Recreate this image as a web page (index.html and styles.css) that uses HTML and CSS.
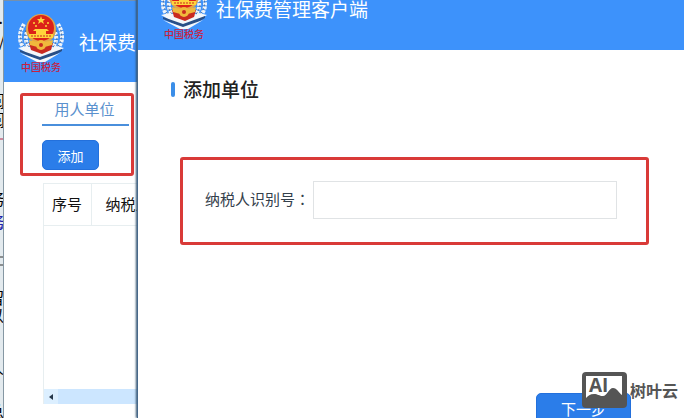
FILE: index.html
```html
<!DOCTYPE html>
<html lang="zh-CN">
<head>
<meta charset="utf-8">
<title>社保费管理客户端</title>
<link rel="stylesheet" href="styles.css">
</head>
<body>
<svg width="0" height="0" class="defs" aria-hidden="true">
  <symbol id="emblem" viewBox="0 0 46 64">
    <g fill="none" stroke="#eef3f8" stroke-width="4" stroke-dasharray="3 1">
      <path d="M6 14C0 24 0 34 10 42"/><path d="M40 14C46 24 46 34 36 42"/>
      <path d="M9 22C6 30 9 36 15 41"/><path d="M37 22C40 30 37 36 31 41"/>
    </g>
    <g fill="none" stroke="#50719c" stroke-width="1" stroke-dasharray="2 2">
      <path d="M5 16C0 25 2 34 12 42"/><path d="M41 16C46 25 44 34 34 42"/>
      <path d="M8 20C5 28 8 35 14 40"/><path d="M38 20C41 28 38 35 32 40"/>
    </g>
    <path d="M0 38L9 36L24 43L38 36L46 38L27 49L20 49Z" fill="#f4f7fa"/>
    <path d="M2 40L22 47L44 39L44 41L27 51L20 50L2 42Z" fill="#294f86"/>
    <path d="M2 43L22 50L42 43L27 52L19 52Z" fill="#f4f7fa"/>
    <path d="M11 33L35 33L33 40L24 44L13 40Z" fill="#c92a20"/>
    <circle cx="23" cy="19" r="15" fill="#e3a546"/>
    <circle cx="23" cy="18" r="13" fill="#dc2119"/>
    <path d="M23 6L24 9L27 9L25 11L26 14L23 12L20 14L21 11L19 9L22 9Z" fill="#ffd43b"/>
    <g fill="#ffd43b"><circle cx="16" cy="13" r="1"/><circle cx="18" cy="16" r="1"/><circle cx="28" cy="16" r="1"/><circle cx="30" cy="13" r="1"/>
      <path d="M17 19H29L31 21H28V24H35V28H11V24H18V21H15Z"/></g>
    <path d="M13 26H33" stroke="#c92a20" stroke-dasharray="2 1"/>
    <path d="M11 30Q23 34 35 30L34 35Q23 39 12 35Z" fill="#f0b83c"/>
    <circle cx="23" cy="35" r="5" fill="#f0b83c"/><circle cx="23" cy="35" r="2" fill="#c92a20"/>
    <text x="23" y="61" text-anchor="middle" class="emblem-name">中国税务</text>
  </symbol>
</svg>

<div class="desktop">
  <svg class="document" aria-hidden="true">
    <g text-anchor="end">
      <text x="3" y="24">.</text><text x="5" y="47">/</text>
      <text x="5" y="107">阅</text><text x="5" y="126">阅</text>
      <text x="5" y="205">务</text><text x="5" y="228" fill="#2222aa">务</text>
      <text x="4" y="287">、</text><text x="4" y="304">留</text><text x="4" y="322">以</text>
      <text x="4" y="374">人</text><text x="4" y="418">总</text>
    </g>
    <path d="M0 139H4" stroke="#b5294c"/><path d="M0 228H4" stroke="#2222aa"/>
    <path d="M0 257H4M0 265H4" stroke="#333"/>
  </svg>

  <main class="window list-window">
    <header class="titlebar">
      <svg class="emblem"><use href="#emblem"/></svg>
      <span class="app-name">社保费</span>
    </header>
    <div class="list-body">
      <div class="callout tools">
        <a class="tab" href="#units">用人单位</a>
        <button class="button add" type="button">添加</button>
      </div>
      <div class="grid" id="units">
        <table>
          <thead><tr><th class="number">序号</th><th>纳税人识别号</th></tr></thead>
        </table>
        <div class="scrollbar">
          <button class="scroll-left" type="button" aria-label="向左滚动"><svg viewBox="0 0 14 14"><path d="M9 4V10L5 7Z" fill="#25374a"/></svg></button>
        </div>
      </div>
    </div>
  </main>

  <section class="window dialog">
    <header class="titlebar">
      <svg class="emblem"><use href="#emblem"/></svg>
      <span class="app-name">社保费管理客户端</span>
    </header>
    <form class="dialog-body">
      <h1>添加单位</h1>
      <div class="callout field">
        <label for="taxpayer">纳税人识别号<span class="colon" lang="zh-TW">：</span></label>
        <input id="taxpayer" type="text">
      </div>
      <button class="button next" type="button">下一步</button>
    </form>
  </section>

  <div class="watermark">
    <svg viewBox="0 0 45 36" aria-hidden="true">
      <rect width="45" height="36" rx="4" fill="#555"/>
      <path d="M4 4H40V23C37 21 35 16 31 16C27 16 25 24 21 24C17 24 16 22 12 22C8 22 6 24 4 26Z" fill="#fff"/>
      <text x="7" y="20" class="mark">AI</text>
    </svg>
    <span>树叶云</span>
  </div>
</div>
</body>
</html>
```
FILE: styles.css
```css
* { box-sizing: border-box; }

body {
  margin: 0;
  font-family: "Noto Sans CJK SC", sans-serif;
  color: #222;
  background: #fff;
}

button, input { font: inherit; }

.defs { position: absolute; }

.desktop {
  position: relative;
  display: flex;
  height: 100vh;
  overflow: hidden;
}

.document {
  flex: none;
  width: 4px;
  height: 100%;
  background: #e3eaee;
  border-right: 1px solid #8597a3;
  font-size: 16px;
}

.window { background: #fff; }

.list-window {
  flex: 1;
  display: flex;
  flex-direction: column;
  border-top: 1px solid #7590ad;
}

.titlebar {
  flex: none;
  display: flex;
  align-items: center;
  height: 81px;
  padding-left: 14px;
  gap: 15px;
  background: #3d92fb;
  color: #fff;
}

.emblem { width: 46px; height: 64px; }

.emblem-name {
  font-family: "Noto Sans CJK SC", sans-serif;
  font-size: 10px;
  font-weight: 500;
  fill: #c9213f;
}

.app-name { font-size: 19px; line-height: 28px; }

.list-body {
  flex: 1;
  display: flex;
  flex-direction: column;
  padding: 11px 16px 14px;
}

.callout {
  border: 3px solid #d93a38;
  border-radius: 3px;
}

.tools {
  align-self: flex-start;
  display: flex;
  flex-direction: column;
  align-items: flex-start;
  gap: 14px;
  width: 114px;
  height: 83px;
  padding-left: 19px;
}

.tab {
  width: 87px;
  height: 30px;
  padding-right: 2px;
  border-bottom: 2px solid #4a8fdc;
  color: #5b91ce;
  font-size: 15px;
  line-height: 26px;
  text-align: center;
  text-decoration: none;
}

.button {
  border: 1px solid #2370dc;
  border-radius: 5px;
  background: #2b7de9;
  color: #fff;
}

.add {
  width: 57px;
  height: 30px;
  padding: 0;
  font-size: 13px;
}

.grid {
  flex: 1;
  display: flex;
  flex-direction: column;
  justify-content: space-between;
  margin: 7px 0 0 23px;
  border-left: 1px solid #e7eef0;
}

table {
  width: 100%;
  border-collapse: collapse;
  color: #111;
  font-size: 15px;
}

th {
  height: 42px;
  padding: 0 14px 3px;
  border: 1px solid #e7eef0;
  border-left: 0;
  font-weight: 400;
  text-align: left;
}

.number { width: 47px; padding: 0 8px 3px; white-space: nowrap; }

.scrollbar { height: 15px; background: #cce6ff; }

.scroll-left {
  display: block;
  width: 14px;
  height: 15px;
  padding: 0;
  border: 0;
  background: #dcefff;
}

.scroll-left svg { display: block; width: 14px; height: 14px; }

.dialog {
  position: absolute;
  inset: -32px 0 0 137px;
  border-left: 1px solid #46688a;
  box-shadow: -1px 0 2px #31516f;
}

.dialog .titlebar {
  height: 82px;
  padding-left: 23px;
  gap: 9px;
}

.dialog-body {
  display: flex;
  flex-direction: column;
  padding: 25px 35px 0 33px;
}

h1 {
  display: flex;
  align-items: center;
  gap: 8px;
  margin: 0;
  font-size: 19px;
  font-weight: 500;
  line-height: 28px;
}

h1::before {
  content: "";
  width: 4px;
  height: 15px;
  border-radius: 2px;
  background: #3b8ee8;
}

.field {
  display: flex;
  align-items: center;
  height: 88px;
  margin: 54px 0 0 9px;
  padding: 0 29px 3px 22px;
}

.field label {
  width: 108px;
  color: #34404c;
  font-size: 15px;
  line-height: 22px;
  padding-bottom: 2px;
  white-space: nowrap;
}

.colon { font-family: "Noto Sans CJK TC", sans-serif; }

.field input {
  flex: 1;
  min-width: 0;
  height: 38px;
  border: 1px solid #e0e3e5;
  background: #fff;
}

.next {
  align-self: flex-end;
  width: 95px;
  height: 34px;
  margin: 148px 18px 0 0;
  padding: 0 0 3px;
  font-size: 15px;
}

.watermark {
  position: absolute;
  right: 6px;
  bottom: 10px;
  display: flex;
  align-items: center;
  gap: 3px;
  color: #555;
  font-size: 16px;
  font-weight: 700;
}

.watermark svg { width: 45px; height: 36px; }

.mark {
  font-family: "Open Sans", sans-serif;
  font-size: 19px;
  font-weight: 700;
  fill: #555;
}
```
